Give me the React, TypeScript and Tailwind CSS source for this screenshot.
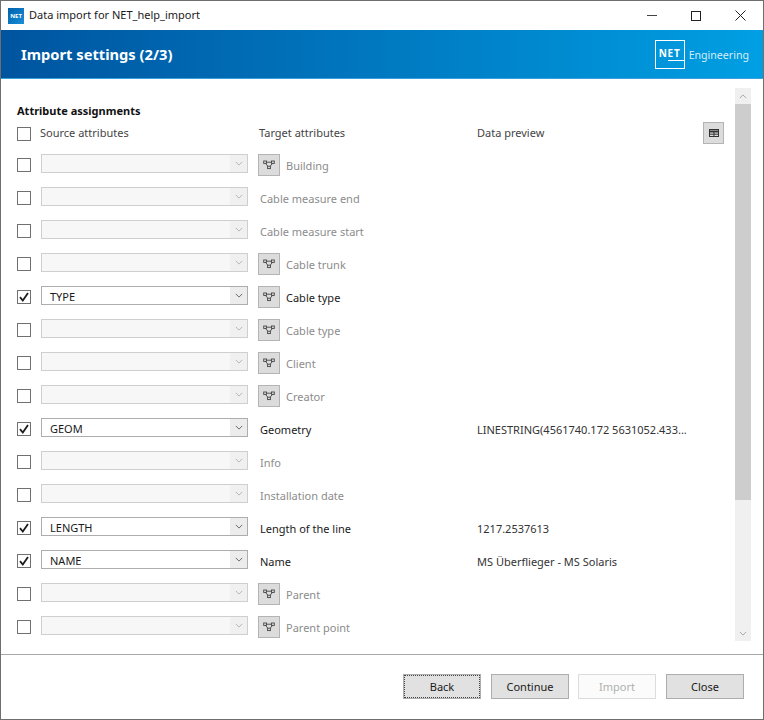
const rows = [
  { target: "Building", link: true },
  { target: "Cable measure end" },
  { target: "Cable measure start" },
  { target: "Cable trunk", link: true },
  { target: "Cable type", link: true, on: true, source: "TYPE" },
  { target: "Cable type", link: true },
  { target: "Client", link: true },
  { target: "Creator", link: true },
  { target: "Geometry", on: true, source: "GEOM", preview: "LINESTRING(4561740.172 5631052.433..." },
  { target: "Info" },
  { target: "Installation date" },
  { target: "Length of the line", on: true, source: "LENGTH", preview: "1217.2537613" },
  { target: "Name", on: true, source: "NAME", preview: "MS Überflieger - MS Solaris" },
  { target: "Parent", link: true },
  { target: "Parent point", link: true },
]

function Checkbox({ checked = false, className = "" }: { checked?: boolean; className?: string }) {
  return (
    <div className={`flex size-[14px] shrink-0 items-center justify-center border border-[#707070] bg-white ${className}`}>
      {checked && (
        <svg viewBox="0 0 12 12" className="size-3" fill="none" stroke="#1c1c1c" strokeWidth="1.8">
          <path d="M2 6.2 4.8 9.5 10 2" />
        </svg>
      )}
    </div>
  )
}

function Chevron({ up = false, color = "#8a8a8a" }: { up?: boolean; color?: string }) {
  return (
    <svg viewBox="0 0 10 6" className="h-[5px] w-2" fill="none" stroke={color} strokeWidth="1.2">
      <path d={up ? "M1 5 5 1 9 5" : "M1 1 5 5 9 1"} />
    </svg>
  )
}

function LinkButton() {
  return (
    <div className="mb-px flex h-[22px] w-[22px] shrink-0 items-center justify-center border border-[#b4b4b4] bg-[#dcdcdc]">
      <svg viewBox="0 0 12 10" className="h-[10px] w-3" fill="none" stroke="#444" strokeWidth="0.9">
        <rect x="0.7" y="1" width="2.8" height="2.4" />
        <rect x="8.5" y="1" width="2.8" height="2.4" />
        <rect x="4.6" y="6.2" width="2.8" height="2.4" />
        <path d="M3.5 2.2H8.5M2.5 3.4 4.8 6.2M9.5 3.4 7.2 6.2" />
      </svg>
    </div>
  )
}

function SourceSelect({ value }: { value?: string }) {
  return (
    <div
      className={`mb-1 flex h-[19px] w-[207px] shrink-0 items-stretch border ${
        value ? "border-[#adadad] bg-white" : "border-[#cfcfcf] bg-[#f7f7f7]"
      }`}
    >
      <span className="flex-1 pl-2 text-[11px] leading-[19px] text-[#1a1a1a]">{value}</span>
      <span className={`flex w-[17px] items-center justify-center ${value ? "bg-[#ececec]" : "bg-[#f0f0f0]"}`}>
        <Chevron color={value ? "#666" : "#b5b5b5"} />
      </span>
    </div>
  )
}

function FooterButton({
  label,
  focused,
  disabled,
  className = "",
}: {
  label: string
  focused?: boolean
  disabled?: boolean
  className?: string
}) {
  return (
    <div
      className={`flex h-[25px] w-[78px] items-center justify-center border text-[11px] ${
        disabled ? "border-[#dcdcdc] bg-[#fbfbfb] text-[#b0b0b0]" : "border-[#adadad] bg-[#e1e1e1] text-[#1a1a1a]"
      } ${className}`}
    >
      {focused ? (
        <span className="flex size-full items-center justify-center border border-dotted border-[#444] pt-px">{label}</span>
      ) : (
        <span className="pt-px">{label}</span>
      )}
    </div>
  )
}

export default function App() {
  return (
    <div
      className="flex h-[720px] w-[764px] flex-col overflow-hidden border border-[#6e6e6e] bg-white text-[11px] text-[#333]"
      style={{ fontFamily: '"Noto Sans", "Open Sans", sans-serif' }}
    >
      <div className="flex h-[29px] shrink-0 items-center pl-[7px]">
        <div className="flex h-4 w-4 items-center justify-center bg-gradient-to-br from-[#0060aa] to-[#1a8fd8] text-[6px] font-bold leading-none text-white">
          NET
        </div>
        <span className="ml-[5px] text-[11px] text-[#1a1a1a]">Data import for NET_help_import</span>
        <div className="ml-auto flex items-center">
          <div className="flex w-[43px] justify-center">
            <div className="h-px w-[10px] bg-[#444]" />
          </div>
          <div className="flex w-[45px] justify-center">
            <div className="size-[10px] border border-[#222]" />
          </div>
          <div className="flex w-[45px] justify-center">
            <svg viewBox="0 0 11 11" className="size-[11px]" fill="none" stroke="#222" strokeWidth="1">
              <path d="M0.5 0.5 10.5 10.5M10.5 0.5 0.5 10.5" />
            </svg>
          </div>
        </div>
      </div>

      <div className="flex h-[49px] shrink-0 items-center justify-between border-b border-[#3aa0dc] bg-gradient-to-r from-[#00549f] to-[#009fe3] pl-5 pr-[14px]">
        <span className="pt-px text-[14.7px] font-bold text-white">Import settings (2/3)</span>
        <div className="flex items-center gap-[4px] text-white">
          <div className="relative flex h-[29px] w-[30px] items-center justify-center border border-white pb-[2px] text-[10px] font-bold tracking-[0.8px]">
            NET
            <div className="absolute bottom-[7px] right-0 h-px w-4 bg-white" />
          </div>
          <span className="pt-[3px] text-[10.6px] text-[#d5eefa]">Engineering</span>
        </div>
      </div>

      <div className="flex min-h-0 flex-1 border-b border-[#a8a8a8] pl-4">
        <div className="w-[707px] shrink-0 pt-[23px]">
          <div className="text-[11px] leading-[18px] font-bold text-[#111]">Attribute assignments</div>
          <div className="mt-[2px] flex h-[23px] items-center">
            <Checkbox />
            <span className="ml-[9px] w-[219px] text-[#444]">Source attributes</span>
            <span className="w-[218px] text-[#444]">Target attributes</span>
            <span className="text-[#444]">Data preview</span>
            <div className="mb-px ml-auto flex h-[22px] w-[21px] items-center justify-center border border-[#b4b4b4] bg-[#dcdcdc]">
              <svg viewBox="0 0 10 8" className="h-2 w-[10px]" fill="none" stroke="#333" strokeWidth="1">
                <rect x="0.5" y="0.5" width="9" height="7" />
                <path d="M0.5 2.5H9.5" strokeWidth="2" />
                <path d="M5 2V8M0.5 5.2H9.5" />
              </svg>
            </div>
          </div>
          <div className="mt-[4px]">
            {rows.map((row, i) => (
              <div key={i} className="flex h-[33px] items-center">
                <Checkbox checked={row.on} className="mb-px" />
                <div className="ml-[10px] flex">
                  <SourceSelect value={row.source} />
                </div>
                <div className="ml-[10px] flex w-[219px] items-center">
                  {row.link && <LinkButton />}
                  <span className={`pt-[2px] ${row.link ? "ml-[6px]" : "ml-[2px]"} ${row.on ? "text-[#1a1a1a]" : "text-[#8c8c8c]"}`}>
                    {row.target}
                  </span>
                </div>
                {row.preview && <span className="whitespace-nowrap pt-px text-[#333]">{row.preview}</span>}
              </div>
            ))}
          </div>
        </div>
        <div className="mt-[9px] mb-[13px] ml-[11px] flex w-4 shrink-0 flex-col bg-[#f0f0f0]">
          <div className="flex h-4 items-center justify-center">
            <Chevron up color="#a6a6a6" />
          </div>
          <div className="h-[396px] bg-[#cdcdcd]" />
          <div className="mt-auto flex h-4 items-center justify-center">
            <Chevron color="#a6a6a6" />
          </div>
        </div>
      </div>

      <div className="flex h-[64px] shrink-0 items-start justify-end gap-[10px] pt-[19px] pr-[19px]">
        <FooterButton label="Back" focused />
        <FooterButton label="Continue" className="-mr-px" />
        <FooterButton label="Import" disabled />
        <FooterButton label="Close" />
      </div>
    </div>
  )
}
